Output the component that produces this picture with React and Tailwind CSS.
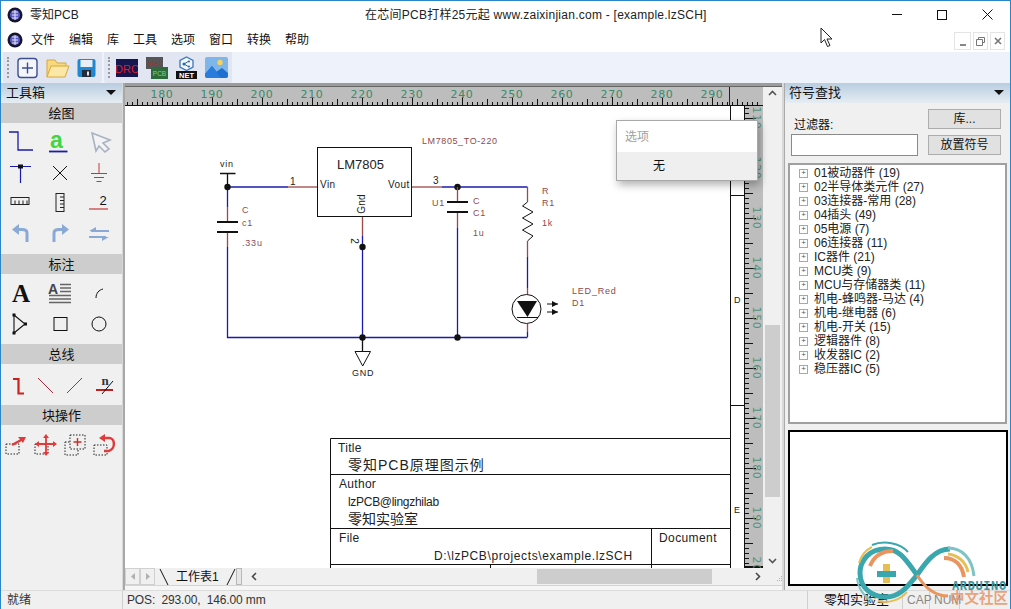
const MENUS = ['文件', '编辑', '库', '工具', '选项', '窗口', '转换', '帮助'];
const TREE = [
  '01被动器件 (19)', '02半导体类元件 (27)', '03连接器-常用 (28)', '04插头 (49)', '05电源 (7)',
  '06连接器 (11)', 'IC器件 (21)', 'MCU类 (9)', 'MCU与存储器类 (11)', '机电-蜂鸣器-马达 (4)',
  '机电-继电器 (6)', '机电-开关 (15)', '逻辑器件 (8)', '收发器IC (2)', '稳压器IC (5)',
];
const WIRE = '#1a1ab0';
const PIN = '#a04848';
const LABEL = '#8f4a4a';

function Logo() {
  return (
    <svg width="16" height="16" viewBox="0 0 16 16">
      <circle cx="8" cy="8" r="7.5" fill="#15152e" />
      <circle cx="8" cy="8" r="5" fill="#5a5ac8" />
      <path d="M5 5h6M8 3v10M5 8h6M5 11h6" stroke="#e4e4f6" strokeWidth="1" fill="none" />
    </svg>
  );
}

function SectionTitle({ children }) {
  return <div className="h-5 bg-[#cdcdcd] flex items-center justify-center text-[13px] text-[#111] leading-none">{children}</div>;
}

function Icon({ children }) {
  return (
    <svg width="28" height="24" viewBox="0 0 28 24" fill="none">
      {children}
    </svg>
  );
}

function Grip() {
  return <div className="w-[2px] h-[21px] ml-[4px] border-l-2 border-dotted border-[#9a9a9a]" />;
}

function TopRuler() {
  const ticks = [];
  for (let i = -7; i < 120; i++) {
    const x = 162 + i * 5;
    const h = i % 10 === 0 ? 8 : i % 5 === 0 ? 6 : 3;
    ticks.push(<line key={i} x1={x + 0.5} x2={x + 0.5} y1={105 - h} y2={105} stroke="#111" />);
  }
  const labels = [180, 190, 200, 210, 220, 230, 240, 250, 260, 270, 280, 290];
  return (
    <svg width="638" height="19" viewBox="125 87 638 19" className="block shrink-0">
      <rect x="125" y="87" width="638" height="19" fill="#bdbdbd" />
      {ticks}
      <line x1="125" x2="763" y1="105.5" y2="105.5" stroke="#111" />
      <line x1="729.5" x2="729.5" y1="87" y2="105" stroke="#222" />
      {labels.map((n) => (
        <text key={n} x={162 + (n - 180) * 5} y="98" textAnchor="middle" fontSize="11" letterSpacing="0.6" fill="#3b8a68" fontFamily="'DejaVu Sans', sans-serif">{n}</text>
      ))}
    </svg>
  );
}

function SideRuler() {
  const ticks = [];
  for (let i = -2; i < 92; i++) {
    const y = 118 + i * 5;
    const w = i % 10 === 0 ? 12 : i % 5 === 0 ? 9 : 5;
    ticks.push(<line key={i} x1="744" x2={744 + w} y1={y + 0.5} y2={y + 0.5} stroke="#111" />);
  }
  const labels = [110, 120, 130, 140, 150, 160, 170, 180, 190, 200];
  return (
    <svg width="19" height="462" viewBox="744 106 19 462" className="block shrink-0">
      <rect x="744" y="106" width="19" height="462" fill="#bdbdbd" />
      {ticks}
      <line x1="744.5" x2="744.5" y1="106" y2="568" stroke="#111" />
      <line x1="744" x2="763" y1="567" y2="567" stroke="#111" strokeWidth="2" />
      {labels.map((n) => {
        const y = 118 + (n - 110) * 5;
        return (
          <text key={n} x="753" y={y} transform={`rotate(90 753 ${y})`} textAnchor="middle" fontSize="11" letterSpacing="0.6" fill="#4f9478" fontFamily="'DejaVu Sans', sans-serif">{n}</text>
        );
      })}
    </svg>
  );
}

function Dot({ x, y }) {
  return <circle cx={x} cy={y} r="3.2" fill="#111" />;
}

function Seg({ d, c = WIRE }) {
  return <path d={d} stroke={c} strokeWidth="1.3" fill="none" />;
}

function T({ x, y, s = 9, c = LABEL, children, sp = 0.8, ...rest }) {
  return <text x={x} y={y} fontSize={s} fill={c} letterSpacing={sp} {...rest}>{children}</text>;
}

function Schematic() {
  return (
    <svg width="619" height="462" viewBox="125 106 619 462" className="block shrink-0 bg-white" fontFamily="'Liberation Sans', 'Noto Sans CJK SC', sans-serif">
      <T x="422" y="144" sp={0.6}>LM7805_TO-220</T>

      {/* vin rail and left capacitor */}
      <T x="220" y="167" c="#222" sp={0.7}>vin</T>
      <Seg c="#111" d="M220 173.5H235.5M227.5 173.5V187" />
      <Seg d="M227.5 187H288" />
      <Seg c={PIN} d="M288 187H318" />
      <T x="290" y="185" s={10} c="#222">1</T>
      <Seg d="M227.5 187V207" />
      <Seg c={PIN} d="M227.5 207V222M227.5 232V247" />
      <path d="M217 222H238M217 232H238" stroke="#111" strokeWidth="2" />
      <Seg d="M227.5 247V337.5H527.5" />
      <Dot x={227.5} y={187} />
      <T x="242" y="213">C</T>
      <T x="242" y="226">c1</T>
      <T x="242" y="246">.33u</T>

      {/* regulator */}
      <rect x="317.5" y="147.5" width="94" height="69" stroke="#111" fill="none" />
      <T x="337" y="169" s={13} c="#222" sp={0}>LM7805</T>
      <T x="320" y="188" c="#222" s={10} sp={0.4}>Vin</T>
      <T x="388" y="188" c="#222" s={10} sp={0.4}>Vout</T>
      <T x="365" y="204" c="#222" s={10} sp={0.2} textAnchor="middle" transform="rotate(-90 365 204)">Gnd</T>
      <Seg c={PIN} d="M362.5 217V236" />
      <Seg d="M362.5 236V337" />
      <T x="351" y="241" s={10} c="#222" sp={0} textAnchor="middle" transform="rotate(90 351 241)">2</T>
      <Dot x={362.5} y={247} />
      <Dot x={362.5} y={337.5} />
      <Seg c="#111" d="M362.5 337V351" />
      <path d="M355 351.5H370.5L362.7 366Z" stroke="#111" fill="white" />
      <T x="352" y="376" c="#222" s={9} sp={0.8}>GND</T>

      {/* output side */}
      <Seg c={PIN} d="M412 187H442" />
      <T x="433" y="184" s={10} c="#222">3</T>
      <Seg d="M442 187H527.5" />
      <Dot x={457.5} y={187} />
      <T x="432" y="206" s={9}>U1</T>
      <Seg c={PIN} d="M457.5 187V202M457.5 212V228" />
      <path d="M447 202H468M447 212H468" stroke="#111" strokeWidth="2" />
      <Seg d="M457.5 228V337" />
      <Dot x={457.5} y={337.5} />
      <T x="473" y="204">C</T>
      <T x="473" y="216">C1</T>
      <T x="473" y="236">1u</T>

      {/* resistor */}
      <Seg c={PIN} d="M527.5 187V202" />
      <path d="M527.5 202L522.5 206L533 212L522.5 218L533 224L522.5 230L533 236L527.5 241" stroke="#111" fill="none" />
      <Seg c={PIN} d="M527.5 241V257" />
      <Seg d="M527.5 257V288" />
      <T x="542" y="194">R</T>
      <T x="542" y="206">R1</T>
      <T x="542" y="226">1k</T>

      {/* LED */}
      <Seg c={PIN} d="M527.5 288V295M527.5 324V332" />
      <Seg d="M527.5 332V337" />
      <circle cx="526.5" cy="309" r="14.5" stroke="#111" fill="white" />
      <path d="M517 301H537L527.5 317Z" fill="#111" />
      <path d="M517 317.5H538" stroke="#111" />
      <path d="M547 304H558M547 312H558" stroke="#111" />
      <path d="M558 304L552 301V307ZM558 312L552 309V315Z" fill="#111" />
      <T x="572" y="294">LED_Red</T>
      <T x="572" y="306">D1</T>

      {/* title block */}
      <g stroke="#111" fill="none">
        <path d="M330.5 568V438.5H730.5M330.5 474.5H730.5M330.5 528.5H730.5M330.5 564.5H730.5M651.5 528.5V568M490.5 564.5V568" />
        <path d="M730.5 106V568M730 195.5H744M730 405.5H744" />
      </g>
      <T x="338" y="452" s={12} c="#222" sp={0.3}>Title</T>
      <T x="348" y="470" s={14} c="#222" sp={1}>零知PCB原理图示例</T>
      <T x="339" y="488" s={12} c="#222" sp={0.3}>Author</T>
      <T x="348" y="506" s={12} c="#222" sp={-0.3}>lzPCB@lingzhilab</T>
      <T x="348" y="524" s={14} c="#222" sp={0}>零知实验室</T>
      <T x="339" y="542" s={12} c="#222" sp={0.3}>File</T>
      <T x="434" y="560" s={12} c="#222" sp={0.6}>D:\lzPCB\projects\example.lzSCH</T>
      <T x="659" y="542" s={12} c="#222" sp={0.4}>Document</T>
      <T x="734" y="303" s={9} c="#222" sp={0}>D</T>
      <T x="734" y="513" s={9} c="#222" sp={0}>E</T>
    </svg>
  );
}

function ArduinoMark() {
  return (
    <svg width="170" height="70" viewBox="850 539 170 70" className="absolute left-[849px] top-[538px] pointer-events-none" fill="none">
      <path d="M917 575C906 560 900 549 885 549C870 549 860 560 860 573C860 588 872 597 886 597C900 597 908 586 917 575C926 562 935 549 950 549" stroke="#3aa6ad" strokeWidth="5" />
      <path d="M917 575C925 588 936 596 948 596" stroke="#e8955f" strokeWidth="3" />
      <path d="M948 548C962 548 972 558 974 576" stroke="#7fc3c5" strokeWidth="3" />
      <path d="M948 554C958 555 966 562 968 572" stroke="#e5bf55" strokeWidth="3" />
      <path d="M944 558C955 558 962 565 964 577" stroke="#e8955f" strokeWidth="4" />
      <path d="M870 566C874 556 882 551 893 551" stroke="#e8955f" strokeWidth="4" />
      <path d="M859 563C861 556 866 550 872 547" stroke="#e5bf55" strokeWidth="2" />
      <path d="M872 545C884 540 900 543 908 552" stroke="#3aa6ad" strokeWidth="2" />
      <path d="M857 578C858 588 864 597 872 600" stroke="#7fc3c5" strokeWidth="2" />
      <path d="M878 601C888 604 900 600 907 592" stroke="#e5bf55" strokeWidth="2" />
      <rect x="883" y="564" width="7" height="19" fill="#e5bf55" />
      <rect x="877" y="571" width="19" height="6" fill="#3aa6ad" />
      <text x="952" y="590" fontSize="12" fontWeight="700" letterSpacing="0.6" fill="#3a97a0" fontFamily="'DejaVu Sans Mono', monospace">ARDUINO</text>
      <text x="950" y="603" fontSize="14.5" fontWeight="700" fill="#e5956a" fillOpacity="0.85" fontFamily="'Noto Sans CJK SC', sans-serif">中文社区</text>
    </svg>
  );
}

export default function App() {
  return (
    <div className="relative w-[1011px] h-[609px] overflow-hidden flex flex-col bg-[#f0f0f0] border-x border-t border-[#2a86c8] text-[12px] text-[#111] [font-family:'Liberation_Sans','Noto_Sans_CJK_SC',sans-serif]">
      {/* title bar */}
      <div className="h-[27px] shrink-0 bg-white flex items-center relative pl-[6px]">
        <Logo />
        <span className="ml-[7px] text-[#222]">零知PCB</span>
        <span className="absolute left-[364px] top-[5px] text-[#222] whitespace-nowrap tracking-[0.25px]">在芯间PCB打样25元起 www.zaixinjian.com - [example.lzSCH]</span>
        <div className="ml-auto flex items-center gap-[35px] pr-[17px]">
          <div className="w-[10px] h-px bg-[#111]" />
          <div className="w-[10px] h-[10px] border border-[#111]" />
          <svg width="11" height="11" viewBox="0 0 11 11"><path d="M0.5 0.5L10.5 10.5M10.5 0.5L0.5 10.5" stroke="#111" /></svg>
        </div>
      </div>

      {/* menu bar */}
      <div className="h-[24px] shrink-0 bg-white flex items-center pl-[6px]">
        <Logo />
        <div className="flex ml-[1px]">
          {MENUS.map((m) => <span key={m} className="px-[7px] text-[#111]">{m}</span>)}
        </div>
        <div className="ml-auto flex gap-[2px] pr-[5px] pt-[2px]">
          <div className="w-[17px] h-[18px] border border-[#e4e4e4] flex items-end justify-center pb-[3px]"><div className="w-[6px] h-[2px] bg-[#888]" /></div>
          <div className="w-[15px] h-[18px] border border-[#e4e4e4] flex items-center justify-center">
            <svg width="9" height="9" viewBox="0 0 9 9" fill="none"><path d="M2.5 2.5V0.5H8.5V5.5H6.5M0.5 2.5H6.5V8.5H0.5Z" stroke="#777" /></svg>
          </div>
          <div className="w-[15px] h-[18px] border border-[#e4e4e4] flex items-center justify-center">
            <svg width="8" height="8" viewBox="0 0 8 8"><path d="M1 1L7 7M7 1L1 7" stroke="#777" strokeWidth="1.6" /></svg>
          </div>
        </div>
      </div>

      {/* toolbar */}
      <div className="h-[31px] shrink-0 bg-[#eef2fb] flex items-stretch pl-[2px] gap-[2px]">
        <div className="w-[99px] bg-[#e1e6f2] rounded-b-[3px] flex items-center">
          <Grip />
          <div className="flex items-center ml-[8px] gap-[7px]">
            <svg width="21" height="22" viewBox="0 0 21 22" fill="none"><rect x="1" y="1.5" width="19" height="19" rx="3" stroke="#3b4f8f" strokeWidth="1.4" fill="#f4f6fc" /><path d="M10.5 5.5V16.500M5 11H16" stroke="#3b4f8f" strokeWidth="1.4" /></svg>
            <svg width="25" height="22" viewBox="0 0 25 22" fill="none"><path d="M2 20V3H10L12 6H21V9" stroke="#d8a83c" fill="#f7d97e" /><path d="M2 20L6 9H24L20 20Z" stroke="#d8a83c" fill="#fbe7a6" /></svg>
            <svg width="19" height="20" viewBox="0 0 19 20"><rect x="0.5" y="1" width="18" height="18" rx="2" fill="#1f88d0" /><rect x="3.500" y="2" width="12" height="7" fill="#e8eef5" /><rect x="5" y="12" width="9" height="7" fill="#222c3a" /><rect x="10" y="13.500" width="2" height="4" fill="#dfe6ee" /></svg>
          </div>
        </div>
        <div className="w-[128px] bg-[#e1e6f2] rounded-b-[3px] flex items-center">
          <Grip />
          <div className="flex items-center ml-[6px] gap-[8px]">
            <svg width="22" height="18" viewBox="0 0 22 18"><rect width="22" height="18" fill="#15154f" /><text x="11" y="14" textAnchor="middle" fontSize="11" fill="#d8202a" fontFamily="'Liberation Sans', sans-serif">DRC</text></svg>
            <svg width="22" height="22" viewBox="0 0 22 22"><rect x="0" y="0" width="17" height="12" fill="#555" /><rect x="5" y="10" width="17" height="12" fill="#2e6b3a" /><text x="8" y="8" textAnchor="middle" fontSize="6" fill="#a83030">SCH</text><text x="13.500" y="19" textAnchor="middle" fontSize="6.500" fill="#7cd67c">PCB</text></svg>
            <svg width="21" height="23" viewBox="0 0 21 23" fill="none"><path d="M10.500 1L17 4.500V11L10.500 14.500L4 11V4.500Z" stroke="#3a78b8" fill="#f2f7fc" strokeWidth="1.300" /><path d="M8 8L13 5M8 8L13 11" stroke="#2a68a8" /><circle cx="8" cy="8" r="1.500" fill="#2a68a8" /><circle cx="13" cy="5.500" r="1" fill="#2a68a8" /><circle cx="13" cy="10.500" r="1" fill="#2a68a8" /><rect x="0" y="15" width="21" height="8" fill="#111" /><text x="10.500" y="22" textAnchor="middle" fontSize="7.500" fontWeight="700" fill="#fff" fontFamily="'Liberation Sans', sans-serif">NET</text></svg>
            <svg width="23" height="21" viewBox="0 0 23 21"><rect width="23" height="21" rx="2" fill="#7fb6ea" /><circle cx="15" cy="5.500" r="2.700" fill="#f4d25e" /><path d="M0 17L7 9L15 19H1ZM11 15L17 11L23 16V19C23 20 22 21 21 21H14Z" fill="#1f6fd0" /><path d="M0 17L7 9L16 21H2C1 21 0 20 0 19Z" fill="#2a7cdc" /></svg>
          </div>
        </div>
      </div>

      {/* main area */}
      <div className="flex-1 min-h-0 flex">
        {/* toolbox */}
        <div className="w-[121px] shrink-0 flex flex-col">
          <div className="h-5 flex items-center justify-between px-[5px] pb-[2px] bg-gradient-to-b from-[#b8cde0] to-[#e6edf3] text-[13px] leading-none">
            <span>工具箱</span>
            <svg width="10" height="5" viewBox="0 0 10 5" className="mr-[1px]"><path d="M0 0H10L5 5Z" fill="#111" /></svg>
          </div>
          <SectionTitle>绘图</SectionTitle>
          <div className="h-[131px] pt-[4px] pr-[4px] grid grid-cols-3 auto-rows-[30.5px] justify-items-center items-center">
            <Icon><path d="M2 2H11V20H26" stroke={WIRE} strokeWidth="1.300" /></Icon>
            <svg width="28" height="30" viewBox="0 0 28 30" fill="none"><text x="10.500" y="21" textAnchor="middle" fontSize="23" fontWeight="700" fill="#3fd63f" fontFamily="'Liberation Sans', sans-serif">a</text><path d="M3 24.500H21.500" stroke={WIRE} strokeWidth="1.800" /></svg>
            <Icon><path d="M7 3L25 10L18 13L24 19L20 22L14 16L11 21Z" stroke="#a9b2c2" strokeWidth="1.600" fill="#f3f3f5" /></Icon>
            <Icon><path d="M3 5.500H24M13.500 5.500V22" stroke={WIRE} strokeWidth="1.200" /><rect x="11" y="3.500" width="5" height="4" fill="#111" /></Icon>
            <Icon><path d="M7 5L21 19M21 5L7 19" stroke="#111" /></Icon>
            <Icon><path d="M14 2V12M6 12.500H22M9 16.500H19M11.500 20.500H16.500" stroke="#c4383c" /></Icon>
            <Icon><rect x="4" y="6.500" width="18" height="7" stroke="#222" /><path d="M8 9.500V13M12 9.500V13M16 9.500V13M20 9.500V13" stroke="#222" /></Icon>
            <Icon><rect x="10" y="2.500" width="8" height="18" stroke="#222" /><path d="M14 6H18M14 9.500H18M14 13H18M14 16.500H18" stroke="#222" /></Icon>
            <svg width="28" height="24" viewBox="0 0 28 24" fill="none"><text x="18" y="14" textAnchor="middle" fontSize="13" fill="#111" fontFamily="'Liberation Sans', sans-serif">2</text><path d="M4 18H23" stroke="#c4383c" strokeWidth="1.200" /></svg>
            <Icon><path d="M20 20V11C20 8.500 18 7.500 15 7.500H9" stroke="#8aa9d6" strokeWidth="3" /><path d="M12 2V13L5 7.500Z" fill="#8aa9d6" /></Icon>
            <Icon><path d="M8 20V11C8 8.500 10 7.500 13 7.500H19" stroke="#8aa9d6" strokeWidth="3" /><path d="M16 2V13L23 7.500Z" fill="#8aa9d6" /></Icon>
            <Icon><path d="M6 9H24M4 15H21" stroke="#8aa9d6" strokeWidth="2" /><path d="M11 5L4 9H11ZM17 19L24 15H17Z" fill="#8aa9d6" /></Icon>
          </div>
          <SectionTitle>标注</SectionTitle>
          <div className="h-[70px] pt-[3px] pr-[4px] grid grid-cols-3 auto-rows-[31px] justify-items-center items-center">
            <svg width="28" height="26" viewBox="0 0 28 26"><text x="14" y="22" textAnchor="middle" fontSize="25" fontWeight="700" fill="#111" fontFamily="'Liberation Serif', serif">A</text></svg>
            <svg width="28" height="24" viewBox="0 0 28 24" fill="none"><text x="7" y="13" textAnchor="middle" fontSize="14" fontWeight="700" fill="#444" fontFamily="'Liberation Sans', sans-serif">A</text><path d="M14 3.500H25M14 7H25M14 10.500H25M3 14.500H25M3 18H25M3 21.500H25" stroke="#666" strokeWidth="1.600" /></svg>
            <Icon><path d="M11 17C11 12 14 9 18 8" stroke="#111" /></Icon>
            <Icon><path d="M7 3L7 21L18 12Z" stroke="#111" strokeWidth="1.100" /><rect x="5.500" y="1.500" width="3" height="3" fill="#111" /><rect x="5.500" y="19.500" width="3" height="3" fill="#111" /><rect x="17" y="10.500" width="3" height="3" fill="#111" /></Icon>
            <Icon><rect x="8" y="5.500" width="13" height="13" stroke="#111" /></Icon>
            <Icon><circle cx="14" cy="12" r="7" stroke="#111" /></Icon>
          </div>
          <SectionTitle>总线</SectionTitle>
          <div className="h-[41px] pr-[2px] grid grid-cols-4 items-center justify-items-center">
            <Icon><path d="M11 6H16.500V20.500H22" stroke="#cc1f1f" strokeWidth="2.200" /></Icon>
            <Icon><path d="M6 5L21 20" stroke="#b02a40" /></Icon>
            <Icon><path d="M21 5L6 20" stroke="#b02a40" /></Icon>
            <svg width="28" height="24" viewBox="0 0 28 24" fill="none"><text x="14" y="12" textAnchor="middle" fontSize="13" fontWeight="700" fill="#333" fontFamily="'Liberation Serif', serif">n</text><path d="M5 17H22" stroke="#c01f1f" strokeWidth="2" /><path d="M11 21L22 8" stroke="#111" /></svg>
          </div>
          <SectionTitle>块操作</SectionTitle>
          <div className="h-[40px] pr-[2px] grid grid-cols-4 items-center justify-items-center">
            <Icon><rect x="4" y="11" width="13" height="10" stroke="#222" strokeDasharray="1.500 1.500" /><path d="M10 12L21 6" stroke="#e03a3a" strokeWidth="2.400" /><path d="M24 4L16 4L21 10Z" fill="#e03a3a" /></Icon>
            <Icon><rect x="3" y="11" width="13" height="10" stroke="#222" strokeDasharray="1.500 1.500" /><path d="M14 4V20M6 11H22" stroke="#e03a3a" strokeWidth="1.800" /><path d="M14 1L11 5H17ZM14 23L11 19H17ZM3 11L7 8V14ZM25 11L21 8V14Z" fill="#e03a3a" /></Icon>
            <Icon><rect x="4" y="9" width="13" height="13" stroke="#222" strokeDasharray="1.500 1.500" /><rect x="9" y="2" width="15" height="14" stroke="#222" strokeDasharray="1.500 1.500" fill="#f0f0f0" /><path d="M16.500 5V13M12.500 9H20.500" stroke="#d02a2a" strokeWidth="1.400" /></Icon>
            <Icon><rect x="3" y="12" width="13" height="10" stroke="#222" strokeDasharray="1.500 1.500" /><path d="M11 5H18C24 5 25 15 18 18H13" stroke="#e03a3a" strokeWidth="2.400" /><path d="M8 5L14 1V9Z" fill="#e03a3a" /></Icon>
          </div>
          <div className="flex-1" />
        </div>

        <div className="w-[3px] shrink-0 bg-[#a8a8a8] border-l border-[#d8d8d8]" />

        {/* document area */}
        <div className="w-[657px] shrink-0 flex flex-col">
          <div className="h-[4px] shrink-0 bg-[#9c9c9c] border-b border-[#666]" />
          <div className="h-[481px] shrink-0 flex">
            <div className="w-[638px] shrink-0 flex flex-col">
              <TopRuler />
              <div className="flex">
                <Schematic />
                <SideRuler />
              </div>
            </div>
            {/* vertical scrollbar */}
            <div className="w-[19px] shrink-0 h-[481px] bg-[#f0f0f0] flex flex-col items-center">
              <svg width="9" height="6" viewBox="0 0 9 6" className="mt-[3px]" fill="none"><path d="M1 5L4.500 1.500L8 5" stroke="#555" strokeWidth="1.600" /></svg>
              <div className="w-[15px] h-[172px] bg-[#cdcdcd] mt-[229px]" />
              <svg width="9" height="6" viewBox="0 0 9 6" className="mt-[61px]" fill="none"><path d="M1 1L4.500 4.500L8 1" stroke="#555" strokeWidth="1.600" /></svg>
            </div>
          </div>
          {/* sheet tabs and horizontal scrollbar */}
          <div className="h-[18px] shrink-0 bg-[#f0f0f0] flex items-center border-b border-[#d4d4d4]">
            <div className="w-[15px] h-[17px] shrink-0 border border-[#d0d0d0] flex items-center justify-center"><svg width="4" height="7" viewBox="0 0 4 7"><path d="M4 0V7L0 3.500Z" fill="#b0b0b0" /></svg></div>
            <div className="w-[15px] h-[17px] shrink-0 border border-[#d0d0d0] flex items-center justify-center"><svg width="4" height="7" viewBox="0 0 4 7"><path d="M0 0V7L4 3.500Z" fill="#b0b0b0" /></svg></div>
            <svg width="10" height="18" viewBox="0 0 10 18" className="ml-[4px] shrink-0" fill="none"><path d="M1 1L9 17" stroke="#111" /></svg>
            <span className="ml-[7px] shrink-0 whitespace-nowrap text-[12px] leading-none">工作表1</span>
            <svg width="10" height="18" viewBox="0 0 10 18" className="ml-[7px] shrink-0" fill="none"><path d="M9 1L1 17" stroke="#111" /></svg>
            <div className="w-[6px] h-[17px] shrink-0 bg-[#e6e6e6] border border-[#b8b8b8]" />
            <svg width="6" height="9" viewBox="0 0 6 9" className="ml-[9px] shrink-0" fill="none"><path d="M5 1L1.500 4.500L5 8" stroke="#444" strokeWidth="1.500" /></svg>
            <div className="ml-[280px] w-[175px] h-[15px] shrink-0 bg-[#cdcdcd]" />
            <svg width="6" height="9" viewBox="0 0 6 9" className="ml-[43px] shrink-0" fill="none"><path d="M1 1L4.500 4.500L1 8" stroke="#444" strokeWidth="1.500" /></svg>
            <svg width="8" height="8" viewBox="0 0 8 8" className="ml-[14px] mt-[5px] shrink-0"><path d="M6 1h1v1H6zM4 3h1v1H4zM6 3h1v1H6zM2 5h1v1H2zM4 5h1v1H4zM6 5h1v1H6z" fill="#b0b0b0" /></svg>
          </div>
          <div className="flex-1 bg-[#f6f6f6]" />
        </div>

        <div className="w-[3px] shrink-0 bg-[#d8d8d8] border-r border-[#aaaaaa]" />

        {/* symbol search */}
        <div className="flex-1 min-w-0 flex flex-col">
          <div className="h-[20px] flex items-center justify-between pl-[4px] pr-[6px] pb-[2px] bg-gradient-to-b from-[#b8cde0] to-[#e6edf3] text-[13px] leading-none">
            <span>符号查找</span>
            <svg width="10" height="5" viewBox="0 0 10 5"><path d="M0 0H10L5 5Z" fill="#111" /></svg>
          </div>
          <div className="h-[60px] flex pl-[6px] pr-[9px] pt-[6px] justify-between">
            <div className="w-[127px] flex flex-col">
              <span className="pl-[3px] pt-[10px] h-[25px] leading-none">过滤器:</span>
              <div className="h-[22px] bg-white border border-[#8a8a8a]" />
            </div>
            <div className="w-[73px] flex flex-col gap-[6px]">
              <div className="h-[20px] bg-[#e1e1e1] border border-[#adadad] flex items-center justify-center">库...</div>
              <div className="h-[20px] bg-[#e1e1e1] border border-[#adadad] flex items-center justify-center">放置符号</div>
            </div>
          </div>
          <div className="mx-[3px] w-[219px] h-[261px] bg-white border-2 border-[#a0a0a0] pl-[9px] pt-[1px]">
            {TREE.map((t) => (
              <div key={t} className="h-[14px] flex items-center leading-none">
                <div className="w-[9px] h-[9px] border border-[#a8a8a8] flex items-center justify-center text-[#555] text-[8px] leading-none">+</div>
                <span className="ml-[6px] whitespace-nowrap text-[#222]">{t}</span>
              </div>
            ))}
          </div>
          <div className="mx-[3px] mt-[6px] w-[220px] h-[156px] bg-white border-2 border-black" />
        </div>
      </div>

      {/* status bar */}
      <div className="h-[19px] shrink-0 bg-[#f0f0f0] border-t border-[#dcdcdc] flex items-center text-[#333]">
        <span className="w-[122px] pl-[6px] border-r border-[#cfcfcf] h-full flex items-center">就绪</span>
        <span className="pl-[4px] w-[685px] border-r border-[#cfcfcf] h-full flex items-center tracking-[-0.15px]">POS:&nbsp; 293.00,&nbsp; 146.00 mm</span>
        <span className="pl-[16px] w-[95px] text-[13px] text-[#111] border-r border-[#cfcfcf] h-full flex items-center">零知实验室</span>
        <span className="pl-[4px] w-[27px] text-[#888] border-r border-[#cfcfcf] h-full flex items-center">CAP</span>
        <span className="pl-[4px] w-[30px] text-[#888] border-r border-[#cfcfcf] h-full flex items-center">NUM</span>
      </div>

      {/* floating option menu over the canvas */}
      <div className="absolute left-[615px] top-[119px] w-[142px] h-[61px] bg-white border border-[#a8a8a8] shadow-[2px_4px_8px_rgba(0,0,0,0.3)] flex flex-col">
        <div className="h-[31px] flex items-center pl-[8px] text-[#a0a0a0]">选项</div>
        <div className="flex-1 bg-[#efefef] flex items-center pl-[36px] text-[#111]">无</div>
      </div>

      {/* mouse pointer from the capture */}
      <svg width="14" height="21" viewBox="0 0 14 21" className="absolute left-[819px] top-[26px]"><path d="M1 1V16L4.500 12.500L7.500 19.500L10 18.500L7 12H12Z" fill="#fff" stroke="#222" /></svg>

      <ArduinoMark />
    </div>
  );
}
